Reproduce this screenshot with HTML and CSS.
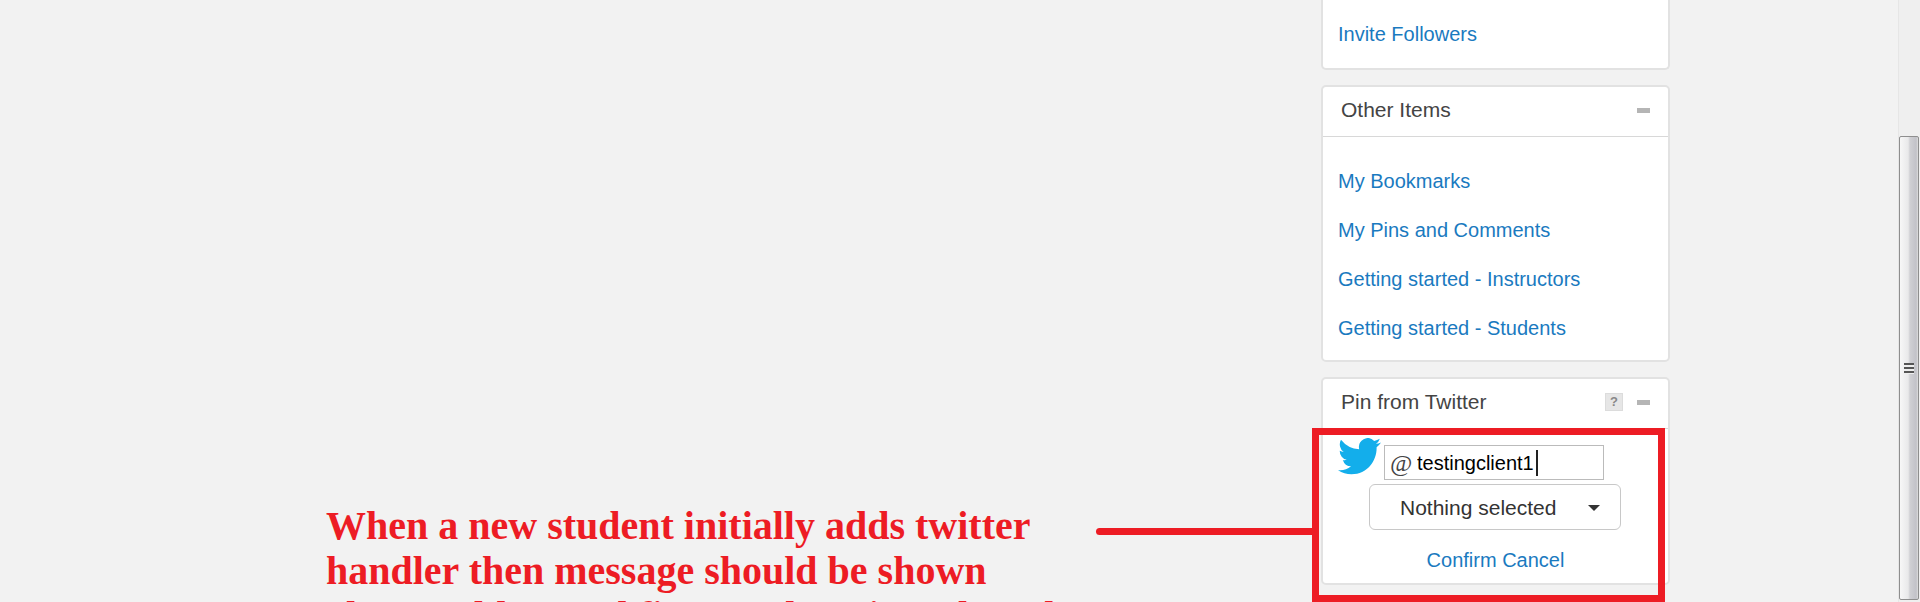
FILE: index.html
```html
<!DOCTYPE html>
<html lang="en">
<head>
<meta charset="utf-8">
<title>Pin from Twitter</title>
<link rel="stylesheet" href="styles.css">
</head>
<body>
<div class="page">
  <main class="content">
    <p class="note">When a new student initially adds twitter<br>handler then message should be shown<br>also would Found first on the min web and</p>
  </main>
  <aside class="sidebar">
    <section class="panel panel-cut">
      <nav class="links"><a href="#">Invite Followers</a></nav>
    </section>
    <section class="panel">
      <header class="panel-head">
        <h2>Other Items</h2>
        <button class="collapse" aria-label="Collapse Other Items"></button>
      </header>
      <nav class="links links-list">
        <a href="#">My Bookmarks</a>
        <a href="#">My Pins and Comments</a>
        <a href="#">Getting started - Instructors</a>
        <a href="#">Getting started - Students</a>
      </nav>
    </section>
    <section class="panel">
      <header class="panel-head">
        <h2>Pin from Twitter</h2>
        <button class="help" aria-label="Help">?</button>
        <button class="collapse" aria-label="Collapse Pin from Twitter"></button>
      </header>
      <form class="twitter">
        <div class="handle-row">
          <svg class="bird" viewBox="0 0 24 20" preserveAspectRatio="none" aria-hidden="true"><path d="M24 2.4a9.800 9.800 0 0 1-2.830.775 4.930 4.930 0 0 0 2.165-2.724 9.900 9.900 0 0 1-3.127 1.195A4.920 4.920 0 0 0 11.830 6.130 13.980 13.980 0 0 1 1.670.980a4.930 4.930 0 0 0 1.524 6.570 4.900 4.900 0 0 1-2.230-.616 4.930 4.930 0 0 0 3.950 4.890 4.940 4.940 0 0 1-2.224.084 4.930 4.930 0 0 0 4.600 3.420A9.900 9.900 0 0 1 0 17.370a13.940 13.940 0 0 0 7.550 2.210c9.140 0 14.300-7.720 13.990-14.640A10 10 0 0 0 24 2.400z"/></svg>
          <div class="handle">
            <label class="at" for="handle">@</label>
            <input id="handle" type="text" value="testingclient1">
            <span class="text-caret"></span>
          </div>
        </div>
        <div class="picker">
          <select aria-label="Board"><option>Nothing selected</option></select>
          <span class="arrow"></span>
        </div>
        <div class="actions"><a href="#">Confirm</a> <a href="#">Cancel</a></div>
      </form>
      <div class="marker"></div>
      <div class="pointer"></div>
    </section>
  </aside>
  <div class="scroll">
    <div class="thumb"><span class="grip"></span></div>
  </div>
</div>
</body>
</html>
```
FILE: styles.css
```css
* { box-sizing: border-box; }
body {
  margin: 0;
  background: #f2f2f2;
  color: #444;
  font-family: "Liberation Sans", Arial, sans-serif;
  font-size: 20px;
}
.page {
  display: flex;
  height: 100vh;
  overflow: hidden;
}
.content {
  flex: 1;
  padding: 503px 0 0 326px;
}
.note {
  margin: 0;
  color: #ed1c24;
  font: bold 40px/45px "Liberation Serif", "Times New Roman", serif;
  white-space: nowrap;
}
.sidebar {
  width: 349px;
  flex: none;
  margin-right: 228px;
}
.panel {
  position: relative;
  margin-bottom: 15px;
  background: #fff;
  border: 2px solid #e2e2e2;
  border-radius: 5px;
}
.panel-cut {
  border-top: 0;
  border-radius: 0 0 5px 5px;
  padding: 10px 0 9px;
}
.panel-head {
  display: flex;
  align-items: center;
  height: 50px;
  padding: 0 18px 3px 18px;
  border-bottom: 1px solid #d8d8d8;
}
h2 {
  flex: 1;
  margin: 0;
  font-size: 21px;
  font-weight: normal;
}
button {
  border: 0;
  padding: 0;
}
.collapse {
  width: 13px;
  height: 5px;
  background: #b5b5b5;
}
.help {
  width: 18px;
  height: 18px;
  margin-right: 14px;
  background: #e6e6e6;
  border: 1px solid #dcdcdc;
  color: #888;
  font: bold 13px/16px "Liberation Sans", Arial, sans-serif;
}
a {
  color: #1a7abf;
  text-decoration: none;
}
.links {
  display: flex;
  flex-direction: column;
  padding-left: 15px;
  line-height: 49px;
}
.links-list { padding: 20px 0 7px 15px; }
.twitter { padding: 9px 15px 7px; }
.handle-row {
  display: flex;
  gap: 3px;
}
.bird {
  width: 43px;
  height: 37px;
  fill: #13aeeb;
}
.handle {
  position: relative;
  display: flex;
  align-items: center;
  width: 220px;
  height: 35px;
  margin-top: 7px;
  border: 1px solid #bbb;
  background: #fff;
}
.at {
  width: 32px;
  padding-left: 5px;
  font: italic 24px/30px "Liberation Serif", "Times New Roman", serif;
}
#handle {
  width: 180px;
  border: 0;
  padding: 0;
  outline: 0;
  background: transparent;
  color: #000;
  font: 20px/30px "Liberation Sans", Arial, sans-serif;
}
.text-caret {
  position: absolute;
  left: 151px;
  top: 4px;
  width: 2px;
  height: 26px;
  background: #222;
}
.picker {
  position: relative;
  width: 252px;
  margin: 4px 0 0 31px;
}
select {
  display: block;
  width: 100%;
  height: 46px;
  padding: 0 0 0 30px;
  appearance: none;
  background: #fff;
  border: 1px solid #c8c8c8;
  border-radius: 6px;
  color: #333;
  font: 21px "Liberation Sans", Arial, sans-serif;
}
.arrow {
  position: absolute;
  right: 21px;
  top: 21px;
  border: 6px solid transparent;
  border-top-color: #333;
  border-bottom: 0;
  pointer-events: none;
}
.actions {
  margin-top: 15px;
  line-height: 31px;
  text-align: center;
}
.marker {
  position: absolute;
  left: -11px;
  right: 3px;
  top: 49px;
  height: 174px;
  border: 7px solid #ed1c24;
}
.pointer {
  position: absolute;
  right: calc(100% + 10px);
  top: 149px;
  width: 217px;
  height: 7px;
  border-radius: 4px 0 0 4px;
  background: #ed1c24;
}
.scroll {
  width: 22px;
  flex: none;
  padding: 136px 1px 2px 0;
  border-left: 1px solid #e6e6e6;
  background: #efefef;
}
.thumb {
  display: flex;
  align-items: center;
  justify-content: center;
  height: 100%;
  border: 1px solid #8e8e8e;
  border-radius: 2px;
  background: linear-gradient(90deg, #f7f7f7, #e9e9ea 45%, #d0d0d4 55%, #c2c2c8 90%, #ddd);
}
.grip {
  width: 10px;
  height: 11px;
  background: repeating-linear-gradient(#555 0 2px, #eee 2px 4px);
}
```
